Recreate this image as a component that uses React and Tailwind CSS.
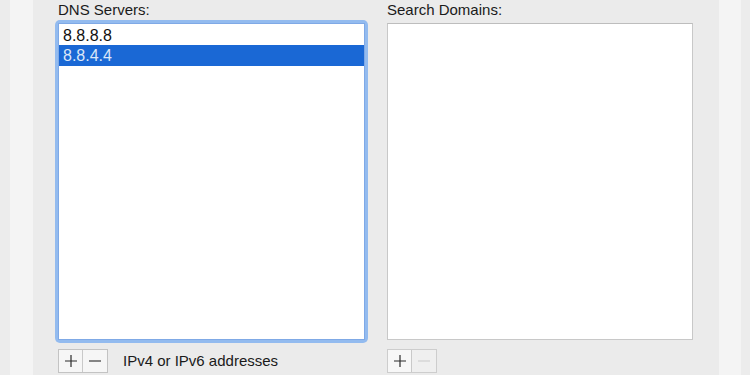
export default function App() {
  const font = { fontFamily: '"Liberation Sans", Arial, sans-serif' };
  return (
    <div className="flex h-[375px] w-[750px] overflow-hidden text-[#1a1a1a]" style={font}>
      <div className="w-[10px] bg-[#ececec]" />
      <div className="w-[23px] bg-[#f4f4f4]" />
      <div className="flex flex-1 bg-[#ebebeb] pl-[25px] pr-[26px]">
        {/* DNS column */}
        <div className="flex w-[307px] flex-col">
          <div className="h-[23px] pt-[1px] text-[15px] leading-[17px]">DNS Servers:</div>
          <div className="h-[317px] rounded-[2px] bg-white shadow-[0_0_0_3px_#93bbef]">
            <div className="h-full border border-[#7fa9e6] pt-[1px]">
              <div className="h-[20px] pl-[4px] text-[16px] leading-[22px] text-[#111]">8.8.8.8</div>
              <div className="h-[21px] bg-[#1a68d5] pl-[4px] text-[16px] leading-[22px] text-[#dce7f8]">8.8.4.4</div>
            </div>
          </div>
          <div className="mt-[9px] flex h-[24px] items-center">
            <div className="flex h-[24px] border border-[#c3c3c3] bg-[#f6f6f6]">
              <div className="flex w-[24px] items-center justify-center border-r border-[#c9c9c9] text-[#333]">
                <svg width="14" height="14" viewBox="0 0 14 14"><path d="M7 1v12M1 7h12" stroke="#2b2b2b" strokeWidth="1.2" /></svg>
              </div>
              <div className="flex w-[24px] items-center justify-center">
                <svg width="14" height="14" viewBox="0 0 14 14"><path d="M1 7h12" stroke="#3a3a3a" strokeWidth="1.2" /></svg>
              </div>
            </div>
            <div className="ml-[15px] text-[15px] leading-[18px]">IPv4 or IPv6 addresses</div>
          </div>
        </div>
        {/* Search domains column */}
        <div className="ml-[22px] flex w-[306px] flex-col">
          <div className="h-[23px] pt-[1px] text-[15px] leading-[17px]">Search Domains:</div>
          <div className="h-[317px] border border-[#c8c8c8] border-t-[#bdbdbd] bg-white" />
          <div className="mt-[9px] flex h-[24px]">
            <div className="flex h-[24px] border border-[#cdcdcd]">
              <div className="flex w-[24px] items-center justify-center border-r border-[#c9c9c9] bg-[#f7f7f7]">
                <svg width="14" height="14" viewBox="0 0 14 14"><path d="M7 1v12M1 7h12" stroke="#2b2b2b" strokeWidth="1.2" /></svg>
              </div>
              <div className="flex w-[24px] items-center justify-center bg-[#efefef]">
                <svg width="14" height="14" viewBox="0 0 14 14"><path d="M1 7h12" stroke="#cfcfcf" strokeWidth="1.2" /></svg>
              </div>
            </div>
          </div>
        </div>
      </div>
      <div className="w-[22px] bg-[#f4f4f4]" />
      <div className="w-[9px] bg-[#ececec]" />
    </div>
  );
}
